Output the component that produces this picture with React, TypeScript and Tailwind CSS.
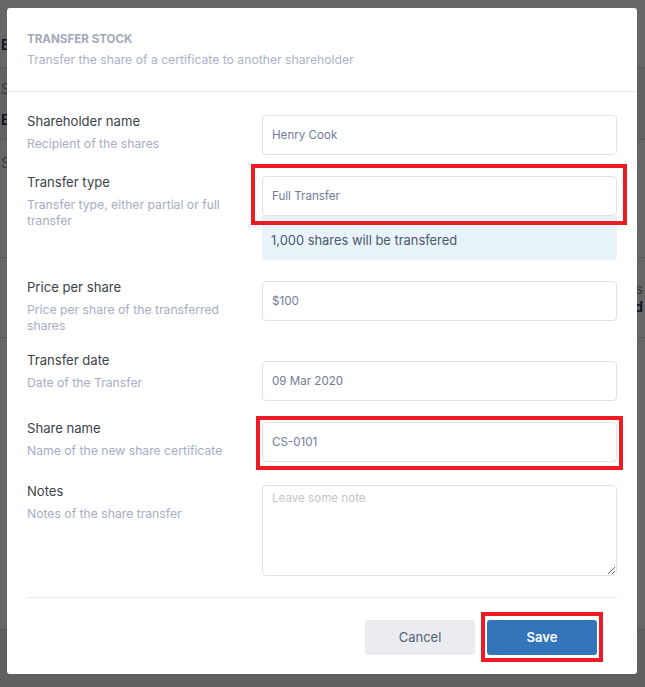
import type { ReactNode } from "react";

const FONT = { fontFamily: "Inter, 'Noto Sans', sans-serif" };

function Field({
  label,
  hint,
  height,
  top = "mt-1",
  children,
}: {
  label: string;
  hint: string;
  height: string;
  top?: string;
  children: ReactNode;
}) {
  return (
    <div className={`flex items-start ${height}`}>
      <div className="w-[235px] shrink-0 pr-[6px]">
        <p className="text-[13.1px] leading-5 text-[#3d4249]">{label}</p>
        <p className="mt-[5px] text-[12.2px] leading-4 text-[#a5aec3]">{hint}</p>
      </div>
      <div className={`flex-1 ${top}`}>{children}</div>
    </div>
  );
}

function TextInput({ value }: { value: string }) {
  return (
    <div className="flex h-10 items-center rounded border border-[#e2e2e2] bg-white px-[9px] pt-px text-[11.6px] text-[#707c98]">
      {value}
    </div>
  );
}

function Marked({ className, children }: { className: string; children: ReactNode }) {
  return (
    <div className="relative">
      {children}
      <div className={`pointer-events-none absolute border-[4px] border-[#ed1c24] ${className}`} />
    </div>
  );
}

// page behind the dialog, only its edges show
function Backdrop() {
  return (
    <div className="flex h-full flex-col bg-[#f3f4f6] text-[14px]">
      <div className="flex h-[68px] items-end border-b border-[#d9d9d9] bg-white pb-[12px] pl-[1px]">
        <span className="font-semibold text-[#1c2b5a]">B</span>
      </div>
      <div className="flex h-[72px] flex-col justify-center gap-[10px] border-b border-[#d9d9d9] pl-[1px]">
        <span className="text-[#8a8f99]">S</span>
        <span className="font-semibold text-[#1c2b5a]">B</span>
      </div>
      <div className="flex h-[118px] items-start border-b border-[#d9d9d9] bg-white pt-[12px] pl-[1px]">
        <span className="text-[#8a8f99]">S</span>
      </div>
      <div className="flex h-[80px] flex-col items-end justify-center border-b border-[#d9d9d9] bg-white pr-[2px] leading-[18px]">
        <span className="text-[#8a8f99]">ls</span>
        <span className="font-semibold text-[#1c2b5a]">ed</span>
      </div>
      <div className="h-[292px] border-b border-[#d9d9d9] bg-white" />
      <div className="flex-1 bg-[#f0f0f0]" />
    </div>
  );
}

export default function App() {
  return (
    <div className="relative h-[687px] w-[645px] overflow-hidden" style={FONT}>
      <Backdrop />
      <div className="absolute inset-0 bg-black/60" />

      <div className="absolute left-[7px] top-[8px] w-[630px] rounded-[3px] bg-white">
        <div className="border-b border-[#ebebeb] px-5 pb-[21px] pt-[21px]">
          <h2 className="text-[11.6px] font-bold uppercase leading-5 text-[#a2a9ba]">Transfer stock</h2>
          <p className="mt-px text-[12.2px] leading-5 text-[#aab2c6]">
            Transfer the share of a certificate to another shareholder
          </p>
        </div>

        <div className="px-5 pt-[19px]">
          <Field label="Shareholder name" hint="Recipient of the shares" height="h-[61px]">
            <TextInput value="Henry Cook" />
          </Field>

          <Field label="Transfer type" hint="Transfer type, either partial or full transfer" height="h-[105px]">
            <Marked className="-bottom-[9px] -left-[11px] -right-[10px] -top-[12px]">
              <TextInput value="Full Transfer" />
            </Marked>
            <div className="flex h-11 items-center rounded-b bg-[#e8f4fa] px-[9px] pt-[6px] text-[12.9px] text-[#4c586f]">
              1,000 shares will be transfered
            </div>
          </Field>

          <Field label="Price per share" hint="Price per share of the transferred shares" height="h-[73px]">
            <TextInput value="$100" />
          </Field>

          <Field label="Transfer date" hint="Date of the Transfer" height="h-[68px]" top="mt-[11px]">
            <TextInput value="09 Mar 2020" />
          </Field>

          <Field label="Share name" hint="Name of the new share certificate" height="h-[63px]">
            <Marked className="-bottom-[8px] -left-[6px] -right-[6px] -top-[6px]">
              <TextInput value="CS-0101" />
            </Marked>
          </Field>

          <Field label="Notes" hint="Notes of the share transfer" height="h-[116px]">
            <textarea
              placeholder="Leave some note"
              className="block h-[91px] w-full rounded border border-[#e2e2e2] px-[9px] py-[4px] text-[11.6px] text-[#707c98] outline-none placeholder:text-[#c6c6c6]"
            />
          </Field>

          <div className="border-t border-[#ebebeb]" />

          <div className="flex justify-end gap-3 pb-[19px] pr-5 pt-[22px]">
            <button className="h-[35px] w-[110px] rounded-[3px] bg-[#ebecef] text-[13px] text-[#56617b]">
              Cancel
            </button>
            <div className="relative">
              <button className="h-[35px] w-[110px] rounded-[3px] bg-[#3375bb] text-[13px] font-semibold text-white">
                Save
              </button>
              <div className="pointer-events-none absolute -bottom-[7px] -left-[6px] -right-[6px] -top-[8px] border-[4px] border-[#ed1c24]" />
            </div>
          </div>
        </div>
      </div>
    </div>
  );
}
